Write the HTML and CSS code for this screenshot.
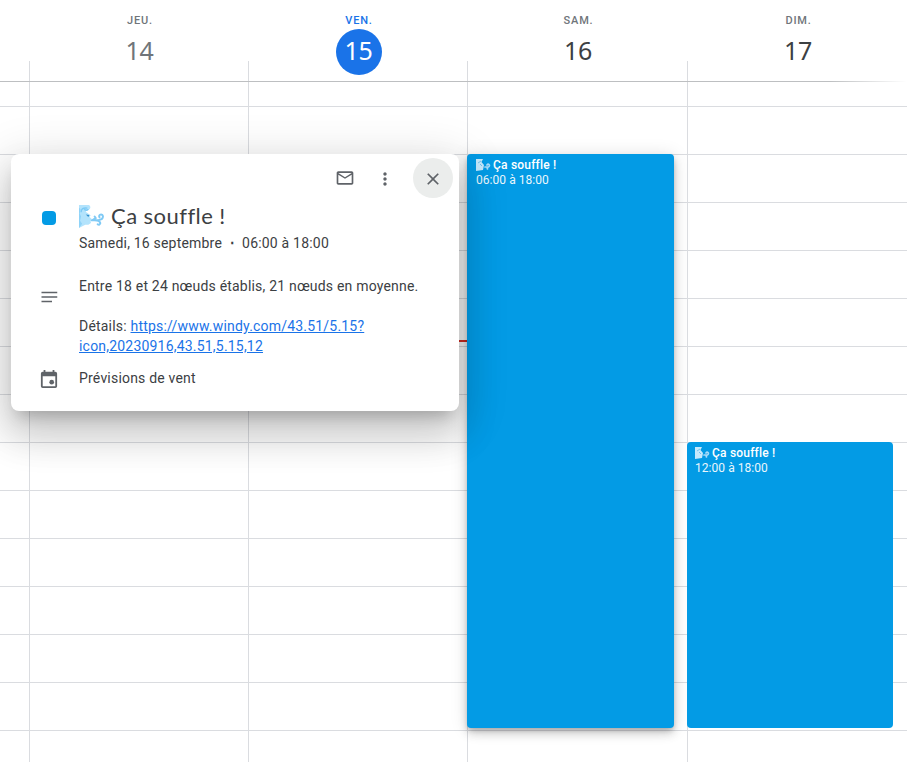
FILE: index.html
```html
<!DOCTYPE html>
<html lang="fr">
<head>
<meta charset="utf-8">
<title>Agenda</title>
<link rel="stylesheet" href="styles.css">
</head>
<body>
<svg width="0" height="0" class="defs" aria-hidden="true">
  <symbol id="wind" viewBox="0 0 24 22">
    <path fill="#b3e3fc" d="M0 0h9.500q2.200 1.500 1 3.500Q9 5.500 6 4.800l1 2 4.200 3-1.200 1.700 2 1.300-1 2 .5 2.500-2.500 1.500-3 .2L0 22z"/>
    <path fill="#8fd3f8" d="M0 2.500l1.500 1.500-.8 4 1.300 3-1 4 2 3-3 4z"/>
    <path fill="none" stroke="#7ccaf6" stroke-width="1.300" d="M2 7q0-5 6-4M5 4q2 2 4 0"/>
    <path fill="#318fce" d="M6.500 9l3.500.5-1 2z"/>
    <path fill="none" stroke="#80caf5" stroke-width="1.900" stroke-linecap="round" d="M12 14.500h6.500q4.500-.5 4.500-3.500-.3-2.300-2.500-1.800-1.800.8-.8 2.600M13 14.500l3-2-1-1.500M15 14.500q5 .2 5.500 2.800-.6 2.200-2.600 1.200"/>
  </symbol>
  <symbol id="wind-small" viewBox="0 0 15 12">
    <path fill="#c5e9fc" d="M0 0h7L5.500 3 8 6 7 11 0 12z"/>
    <path fill="none" stroke="#71c1ed" stroke-width="1" d="M2 4l3-2M4 5l2 2"/>
    <path fill="none" stroke="#a9dcf9" stroke-width="1.700" stroke-linecap="round" d="M9 8h3.500Q14 6.500 13 5.500T11 6M11 8l.5 2"/>
  </symbol>
</svg>
<main class="calendar">
  <header class="days">
    <div class="day day-edge"></div>
    <div class="day past"><span class="name">JEU.</span><span class="num">14</span></div>
    <div class="day today"><span class="name">VEN.</span><span class="num">15</span></div>
    <div class="day"><span class="name">SAM.</span><span class="num">16</span></div>
    <div class="day"><span class="name">DIM.</span><span class="num">17</span></div>
  </header>
  <section class="grid">
    <div class="col col-edge"></div>
    <div class="col"></div>
    <div class="col"><div class="now"></div></div>
    <div class="col">
      <article class="event event-sat">
        <div class="event-title"><svg><use href="#wind-small"/></svg><span>Ça souffle !</span></div>
        <div class="event-time">06:00 à 18:00</div>
      </article>
    </div>
    <div class="col">
      <article class="event event-sun">
        <div class="event-title"><svg><use href="#wind-small"/></svg><span>Ça souffle !</span></div>
        <div class="event-time">12:00 à 18:00</div>
      </article>
    </div>
  </section>
  <aside class="popup">
    <div class="actions">
      <span class="action"><svg viewBox="0 0 24 24"><path d="M22 6c0-1.100-.9-2-2-2H4c-1.100 0-2 .9-2 2v12c0 1.100.9 2 2 2h16c1.100 0 2-.9 2-2V6zm-2 0l-8 5-8-5h16zm0 12H4V8l8 5 8-5v10z"/></svg></span>
      <span class="action more"><svg viewBox="0 0 24 24"><path d="M12 8c1.100 0 2-.9 2-2s-.9-2-2-2-2 .9-2 2 .9 2 2 2zm0 2c-1.100 0-2 .9-2 2s.9 2 2 2 2-.9 2-2-.9-2-2-2zm0 6c-1.100 0-2 .9-2 2s.9 2 2 2 2-.9 2-2-.9-2-2-2z"/></svg></span>
      <span class="action close"><svg viewBox="0 0 24 24"><path d="M19 6.410L17.590 5 12 10.590 6.410 5 5 6.410 10.590 12 5 17.590 6.410 19 12 13.410 17.590 19 19 17.590 13.410 12z"/></svg></span>
    </div>
    <div class="row heading">
      <span class="swatch"></span>
      <div class="body">
        <h1><svg class="wind"><use href="#wind"/></svg><span>Ça souffle !</span></h1>
        <p class="when">Samedi, 16 septembre<span class="dot">⋅</span>06:00 à 18:00</p>
      </div>
    </div>
    <div class="row description">
      <svg class="icon" viewBox="0 0 24 24"><path d="M2 5h21v2H2zM2 11h21v2H2zM2 17h14v2H2z"/></svg>
      <div class="body">
        <p>Entre 18 et 24 nœuds établis, 21 nœuds en moyenne.</p>
        <p class="details">Détails: <a href="#">https://www.windy.com/43.51/5.15?<br>icon,20230916,43.51,5.15,12</a></p>
      </div>
    </div>
    <div class="row source">
      <svg class="icon" viewBox="0 0 20 20"><path fill-rule="evenodd" d="M4 0h2v2h8V0h2v2h1q2 0 2 2v14q0 2-2 2H3q-2 0-2-2V4q0-2 2-2h1zM3 7v11h14V7z"/><circle cx="13" cy="13.500" r="2.600"/></svg>
      <div class="body"><p>Prévisions de vent</p></div>
    </div>
  </aside>
</main>
</body>
</html>
```
FILE: styles.css
```css
* { box-sizing: border-box; }
body { margin: 0; background: #fff; font-family: Roboto, sans-serif; color: #3c4043; }
p, h1 { margin: 0; }
.defs { position: absolute; }
.calendar { position: relative; width: 907px; height: 762px; overflow: hidden; }

.days, .grid { display: grid; grid-template-columns: 29px 219px 219px 220px 220px; }
.days { height: 82px; position: relative; }
.days::after {
  content: ""; position: absolute; left: 0; right: 0; bottom: 0; height: 1px;
  background: linear-gradient(to right, #bdbfc1 0, #bdbfc1 830px, #fff 907px);
}
.day { position: relative; display: flex; flex-direction: column; align-items: center; padding: 14px 0 0 2px; }
.day:not(.day-edge)::before {
  content: ""; position: absolute; left: 0; bottom: 0; width: 1px; height: 21px; background: #dadce0;
}
.name { font-size: 11px; line-height: 13px; font-weight: 500; letter-spacing: .8px; color: #70757a; padding-left: 1px; }
.num {
  width: 46px; height: 46px; margin-top: 2px; border-radius: 50%;
  font: 25px/42px "Noto Sans", sans-serif; letter-spacing: -.3px; text-align: center;
}
.past .num { color: #70757a; }
.today .name { color: #1a73e8; }
.today .num { background: #1a73e8; color: #fff; }

.grid {
  height: 680px;
  background: repeating-linear-gradient(#dadce0 0 1px, #fff 1px 48px) 0 -24px / 100% 720px;
}
.col { border-left: 1px solid #dadce0; }
.col-edge { border: 0; }
.now { height: 2px; margin-top: 258px; background: #d93025; }

.event { margin-left: -1px; padding: 3px 9px; border-radius: 4px; background: #039be5; color: #fff; font-size: 12px; }
.event-sat {
  width: 207px; height: 574px; margin-top: 72px;
  box-shadow: 0 6px 10px rgba(0,0,0,.14), 0 1px 18px rgba(0,0,0,.12), 0 3px 5px -1px rgba(0,0,0,.2);
}
.event-sun { width: 206px; height: 286px; margin-top: 360px; padding-left: 8px; }
.event-title { display: flex; align-items: center; gap: 2px; height: 16px; line-height: 16px; font-weight: 500; letter-spacing: .2px; }
.event-title svg { width: 15px; height: 12px; }
.event-time { line-height: 15px; letter-spacing: .05px; opacity: .92; }

.popup {
  position: absolute; left: 11px; top: 154px; width: 448px; height: 257px;
  background: #fff; border-radius: 8px;
  box-shadow: 0 24px 38px 3px rgba(0,0,0,.14), 0 9px 46px 8px rgba(0,0,0,.12), 0 11px 15px -7px rgba(0,0,0,.2);
}
.actions { display: flex; justify-content: flex-end; padding: 4px 6px 0 0; height: 46px; }
.action { width: 40px; height: 40px; display: flex; align-items: center; justify-content: center; }
.action svg { width: 20px; height: 20px; fill: #5f6368; }
.more, .close { padding-top: 2px; }
.close { margin-left: 8px; border-radius: 50%; background: #ebedec; }
.row { display: grid; grid-template-columns: 39px 1fr; padding-left: 29px; font-size: 14px; line-height: 20px; letter-spacing: .2px; }
.heading { height: 76px; }
.swatch { width: 14px; height: 14px; margin: 11px 0 0 2px; border-radius: 4px; background: #039be5; }
h1 { display: flex; align-items: center; height: 33px; font: 400 22px/31px Lato, sans-serif; letter-spacing: .45px; }
h1 span { height: 33px; }
.wind { width: 25px; height: 23px; margin-right: 7px; }
.dot { display: inline-block; width: 20px; text-align: center; font-weight: 700; }
.icon { width: 18px; height: 18px; fill: #5f6368; }
.description { height: 92px; }
.description .icon { margin-top: 12px; }
.details { margin-top: 20px; }
a { color: #1a73e8; }
.source .icon { margin-top: 2px; }
```
